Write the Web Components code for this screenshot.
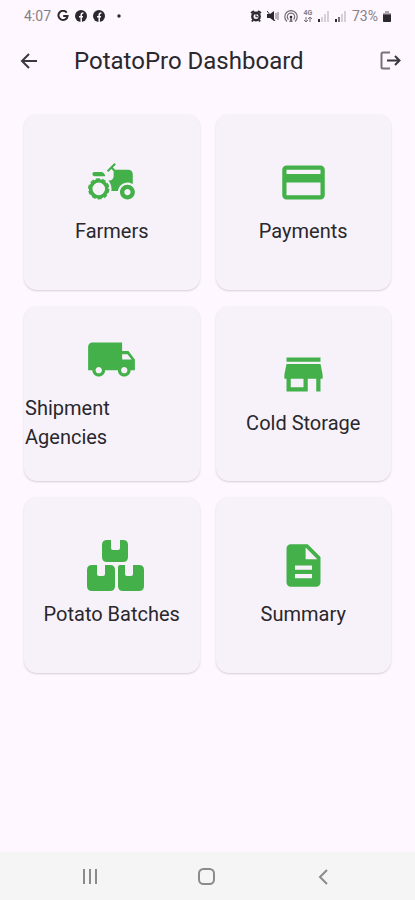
<!DOCTYPE html>
<html lang="en">
<head>
<meta charset="utf-8">
<meta name="viewport" content="width=device-width, initial-scale=1">
<title>PotatoPro Dashboard</title>
<style>
	body {
		margin: 0;
		background: #fef7ff;
		color: #2a272d;
		font-family: Roboto, "Liberation Sans", sans-serif;
	}
</style>
</head>
<body>
<potato-app>
	<potato-status-bar slot="status" time="4:07" battery="73%"></potato-status-bar>
	<potato-app-bar slot="header">PotatoPro Dashboard</potato-app-bar>
	<potato-card icon="tractor">Farmers</potato-card>
	<potato-card icon="payment">Payments</potato-card>
	<potato-card icon="truck" wide>Shipment<br>Agencies</potato-card>
	<potato-card icon="store">Cold Storage</potato-card>
	<potato-card icon="boxes">Potato Batches</potato-card>
	<potato-card icon="document">Summary</potato-card>
	<potato-nav-bar slot="footer"></potato-nav-bar>
</potato-app>

<script>
const ICONS = {
	tractor: `<svg viewBox="0 0 24 24">
		<path d="M19.5 12c.93 0 1.78.28 2.5.76V8c0-1.1-.9-2-2-2h-6.29l-1.06-1.06 1.41-1.41-.71-.71-3.53 3.53.71.71 1.41-1.41L13 6.71V9c0 1.1-.9 2-2 2h-.54c.95 1.06 1.54 2.46 1.54 4 0 .34-.04.67-.09 1h3.14c.25-2.25 2.14-4 4.45-4z"/>
		<path d="M19.5 13c-1.93 0-3.5 1.57-3.5 3.5s1.57 3.5 3.5 3.5 3.5-1.57 3.5-3.5-1.57-3.5-3.5-3.5zm0 5c-.83 0-1.5-.67-1.5-1.5s.67-1.5 1.5-1.5 1.5.67 1.5 1.5-.67 1.5-1.5 1.5zM4 9h5c0-1.1-.9-2-2-2H4c-.55 0-1 .45-1 1s.45 1 1 1z"/>
		<circle cx="6" cy="15" r="3.8" fill="none" stroke="currentColor" stroke-width="1.7"/>
		<circle cx="6" cy="15" r="4.7" fill="none" stroke="currentColor" stroke-width=".7" stroke-dasharray="1.9 1.05"/>
	</svg>`,
	payment: `<svg viewBox="0 0 24 24"><path d="M20 4H4c-1.11 0-1.99.89-1.99 2L2 18c0 1.11.89 2 2 2h16c1.11 0 2-.89 2-2V6c0-1.11-.89-2-2-2zm0 14H4v-6h16v6zm0-10H4V6h16v2z"/></svg>`,
	truck: `<svg viewBox="0 0 24 24"><path d="M20 8h-3V4H3c-1.1 0-2 .9-2 2v11h2c0 1.66 1.34 3 3 3s3-1.34 3-3h6c0 1.66 1.34 3 3 3s3-1.34 3-3h2v-5l-3-4zM6 18.5c-.83 0-1.5-.67-1.5-1.5s.67-1.5 1.5-1.5 1.5.67 1.5 1.5-.67 1.5-1.5 1.5zm13.5-9l1.96 2.5H17V9.5h2.5zm-1.5 9c-.83 0-1.5-.67-1.5-1.5s.67-1.5 1.5-1.5 1.5.67 1.5 1.5-.67 1.5-1.5 1.5z"/></svg>`,
	store: `<svg viewBox="0 0 24 24"><path d="M20 4H4v2h16V4zm1 10v-2l-1-5H4l-1 5v2h1v6h10v-6h4v6h2v-6h1zm-9 4H6v-4h6v4z"/></svg>`,
	boxes: `<svg viewBox="0 0 51 51">
		<path d="M21 0h4v8q0 2 2 2h5q2 0 2-2V0h3q5 0 5 5v12q0 5-5 5H21q-5 0-5-5V5q0-5 5-5z"/>
		<path d="M6 25h5v9q0 2 2 2h4q2 0 2-2v-9h5q5 0 5 5v16q0 5-5 5H6q-5 0-5-5V30q0-5 5-5z"/>
		<path d="M34 25h5v9q0 2 2 2h4q2 0 2-2v-9h6q5 0 5 5v16q0 5-5 5H37q-5 0-5-5V27q0-2 2-2z"/>
	</svg>`,
	document: `<svg viewBox="0 0 24 24"><path d="M14 2H6c-1.1 0-1.99.9-1.99 2L4 20c0 1.1.89 2 1.99 2H18c1.1 0 2-.9 2-2V8l-6-6zm2 16H8v-2h8v2zm0-4H8v-2h8v2zm-3-5V3.5L18.5 9H13z"/></svg>`
};

/////////////////////////////////////////////// App ////////////////////////////////////////////////

const appTemplate = document.createElement("template");
appTemplate.innerHTML = `
<style>
	:host {
		display: flex;
		flex-direction: column;
		min-height: 100vh;
	}
	main {
		flex: 1;
		display: grid;
		grid-template-columns: 1fr 1fr;
		align-content: start;
		gap: 16px;
		padding: 24px;
	}
</style>
<slot name="status"></slot>
<slot name="header"></slot>
<main><slot></slot></main>
<slot name="footer"></slot>
`;
class PotatoApp extends HTMLElement {
	constructor() {
		super();
		this.attachShadow({ mode: "open" });
		this.shadowRoot.appendChild(appTemplate.content.cloneNode(true));
	}
}
customElements.define("potato-app", PotatoApp);

//////////////////////////////////////////// Status bar ////////////////////////////////////////////

const statusTemplate = document.createElement("template");
statusTemplate.innerHTML = `
<style>
	:host {
		display: flex;
		justify-content: space-between;
		height: 32px;
		padding: 0 24px;
		color: #858088;
		font-size: 14px;
	}
	div {
		display: flex;
		align-items: center;
		gap: 5px;
	}
	.left {
		gap: 6px;
	}
	svg {
		display: block;
		height: 12px;
		fill: #2b282e;
	}
	.network {
		display: grid;
		justify-items: center;
		font-size: 7px;
		font-weight: 700;
		line-height: 7px;
	}
	.network svg {
		height: 5px;
	}
</style>
<div class="left">
	<span id="time"></span>
	<svg width="12" viewBox="0 0 12 12" aria-label="Google"><path d="M9.7 2.6A4.6 4.6 0 1 0 10.6 6H6.2" fill="none" stroke="#2b282e" stroke-width="2"/></svg>
	<svg width="12" viewBox="0 0 12 12" aria-label="Facebook"><circle cx="6" cy="6" r="6"/><path d="M6.2 12V5q0-2 2.2-2M4 6.7h4" fill="none" stroke="#fef7ff" stroke-width="1.5"/></svg>
	<svg width="12" viewBox="0 0 12 12" aria-label="Facebook"><circle cx="6" cy="6" r="6"/><path d="M6.2 12V5q0-2 2.2-2M4 6.7h4" fill="none" stroke="#fef7ff" stroke-width="1.5"/></svg>
	<svg width="14" viewBox="0 0 14 12"><circle cx="8" cy="6" r="1.7"/></svg>
</div>
<div>
	<svg width="12" viewBox="0 0 12 12" aria-label="Alarm"><path d="M1 3l3-2M11 3L8 1M3 10l-1 1.500M9 10l1 1.500" stroke="#2b282e" stroke-width="2"/><circle cx="6" cy="6.5" r="3.7" fill="none" stroke="#2b282e" stroke-width="2.4"/><path d="M5.5 4v3.300H8v-1H6.500V4z"/></svg>
	<svg width="12" viewBox="0 0 12 12" aria-label="Vibrate"><path d="M0 4h3l4-3v10L3 8H0z"/><path d="M0 1l8 10" stroke="#2b282e"/><path d="M9 3v6M11 2v8" fill="none" stroke="#77727a"/></svg>
	<svg width="14" viewBox="0 0 14 12" aria-label="Hotspot"><g fill="none" stroke="#77727a" stroke-width="1.2"><path d="M3 11.500a6.200 6.200 0 1 1 8 0"/><path d="M4.500 9.500a3.700 3.700 0 1 1 5 0"/></g><circle cx="7" cy="7" r="1.3"/><path d="M6.300 8h1.400l1 4H5.300z" fill="#77727a"/></svg>
	<span class="network">4G<svg width="10" viewBox="0 0 10 5"><path d="M3 0v5M1 3l2 2 2-2M7 5V0M5 2l2-2 2 2" fill="none" stroke="#77727a"/></svg></span>
	<svg width="12" viewBox="0 0 12 12" aria-label="Signal 1"><path d="M0 9h2v3H0z"/><path d="M3 7h2v5H3zM6 4h2v8H6zM9 1h2v11H9z" fill="#d5cfd7"/></svg>
	<svg width="12" viewBox="0 0 12 12" aria-label="Signal 2"><path d="M0 9h2v3H0z"/><path d="M3 7h2v5H3z" fill="#77727a"/><path d="M6 4h2v8H6zM9 1h2v11H9z" fill="#d5cfd7"/></svg>
	<span id="battery"></span>
	<svg width="8" viewBox="0 0 8 12" aria-label="Battery"><path d="M2 1h4v2h2v9H0V3h2z" fill="#aaa5ad"/><path d="M0 4.500h8V11q0 1-1 1H1q-1 0-1-1z"/></svg>
</div>
`;
class PotatoStatusBar extends HTMLElement {
	constructor() {
		super();
		this.attachShadow({ mode: "open" });
		this.shadowRoot.appendChild(statusTemplate.content.cloneNode(true));
	}

	static get observedAttributes() {
		return ["time", "battery"];
	}

	attributeChangedCallback(name, oldValue, newValue) {
		this.shadowRoot.getElementById(name).textContent = newValue;
	}
}
customElements.define("potato-status-bar", PotatoStatusBar);

////////////////////////////////////////////// App bar /////////////////////////////////////////////

const barTemplate = document.createElement("template");
barTemplate.innerHTML = `
<style>
	:host {
		display: flex;
		align-items: center;
		height: 58px;
		padding: 0 12px 0 16px;
	}
	h1 {
		flex: 1;
		margin: 0 0 0 32px;
		font-size: 24px;
		font-weight: 400;
		line-height: 30px;
		white-space: nowrap;
	}
	button {
		padding: 0;
		border: 0;
		background: none;
		color: inherit;
		cursor: pointer;
	}
	svg {
		display: block;
		width: 26px;
		height: 26px;
		fill: none;
		stroke: #3a373d;
		stroke-width: 2;
	}
</style>
<button type="button" aria-label="Back"><svg viewBox="0 0 26 26"><path d="M21 13H6M13 6l-7 7 7 7"/></svg></button>
<h1><slot></slot></h1>
<button type="button" aria-label="Log out"><svg viewBox="0 0 26 26"><path d="M13 4.500H6q-1.500 0-1.500 1.500v13q0 1.500 1.500 1.500h7" stroke="#77727a"/><path d="M10 12.500h12M18 8l4.500 4.500L18 17"/></svg></button>
`;
class PotatoAppBar extends HTMLElement {
	constructor() {
		super();
		this.attachShadow({ mode: "open" });
		this.shadowRoot.appendChild(barTemplate.content.cloneNode(true));
	}
}
customElements.define("potato-app-bar", PotatoAppBar);

/////////////////////////////////////////////// Card ///////////////////////////////////////////////

const cardTemplate = document.createElement("template");
cardTemplate.innerHTML = `
<style>
	:host {
		display: block;
		aspect-ratio: 1;
	}
	button {
		display: flex;
		flex-direction: column;
		align-items: center;
		justify-content: center;
		gap: 9px;
		box-sizing: border-box;
		width: 100%;
		height: 100%;
		padding: 0 1px;
		border: 0;
		border-radius: 13px;
		background: #f7f2fa;
		box-shadow: 0 1px 2px rgba(0, 0, 0, .17);
		color: inherit;
		font: inherit;
		font-size: 20px;
		line-height: 29px;
		cursor: pointer;
	}
	:host([wide]) .label {
		align-self: stretch;
		text-align: left;
	}
	.icon {
		color: #43b04a;
	}
	svg {
		display: block;
		width: 51px;
		height: 51px;
		overflow: visible;
		fill: currentColor;
	}
</style>
<button type="button">
	<span class="icon"></span>
	<span class="label"><slot></slot></span>
</button>
`;
class PotatoCard extends HTMLElement {
	constructor() {
		super();
		this.attachShadow({ mode: "open" });
		this.shadowRoot.appendChild(cardTemplate.content.cloneNode(true));
	}

	static get observedAttributes() {
		return ["icon"];
	}

	attributeChangedCallback(name, oldValue, newValue) {
		this.shadowRoot.querySelector(".icon").innerHTML = ICONS[newValue] || "";
	}
}
customElements.define("potato-card", PotatoCard);

////////////////////////////////////////// Navigation bar //////////////////////////////////////////

const navTemplate = document.createElement("template");
navTemplate.innerHTML = `
<style>
	:host {
		display: block;
		background: #f5f5f5;
	}
	nav {
		display: grid;
		grid-template-columns: repeat(3, 1fr);
		height: 48px;
		padding: 0 32px;
	}
	button {
		display: grid;
		place-items: center;
		padding: 0;
		border: 0;
		background: none;
		cursor: pointer;
	}
	svg {
		width: 20px;
		height: 20px;
		fill: none;
		stroke: #8b8b8b;
		stroke-width: 2;
	}
</style>
<nav>
	<button type="button" aria-label="Recent apps"><svg viewBox="0 0 20 20"><path d="M3 3v15M9 3v15M15 3v15"/></svg></button>
	<button type="button" aria-label="Home"><svg viewBox="0 0 20 20"><rect x="1" y="3" width="15" height="15" rx="4.500"/></svg></button>
	<button type="button" aria-label="Back"><svg viewBox="0 0 20 20"><path d="M12 4l-7 7 7 7"/></svg></button>
</nav>
`;
class PotatoNavBar extends HTMLElement {
	constructor() {
		super();
		this.attachShadow({ mode: "open" });
		this.shadowRoot.appendChild(navTemplate.content.cloneNode(true));
	}
}
customElements.define("potato-nav-bar", PotatoNavBar);
</script>
</body>
</html>
